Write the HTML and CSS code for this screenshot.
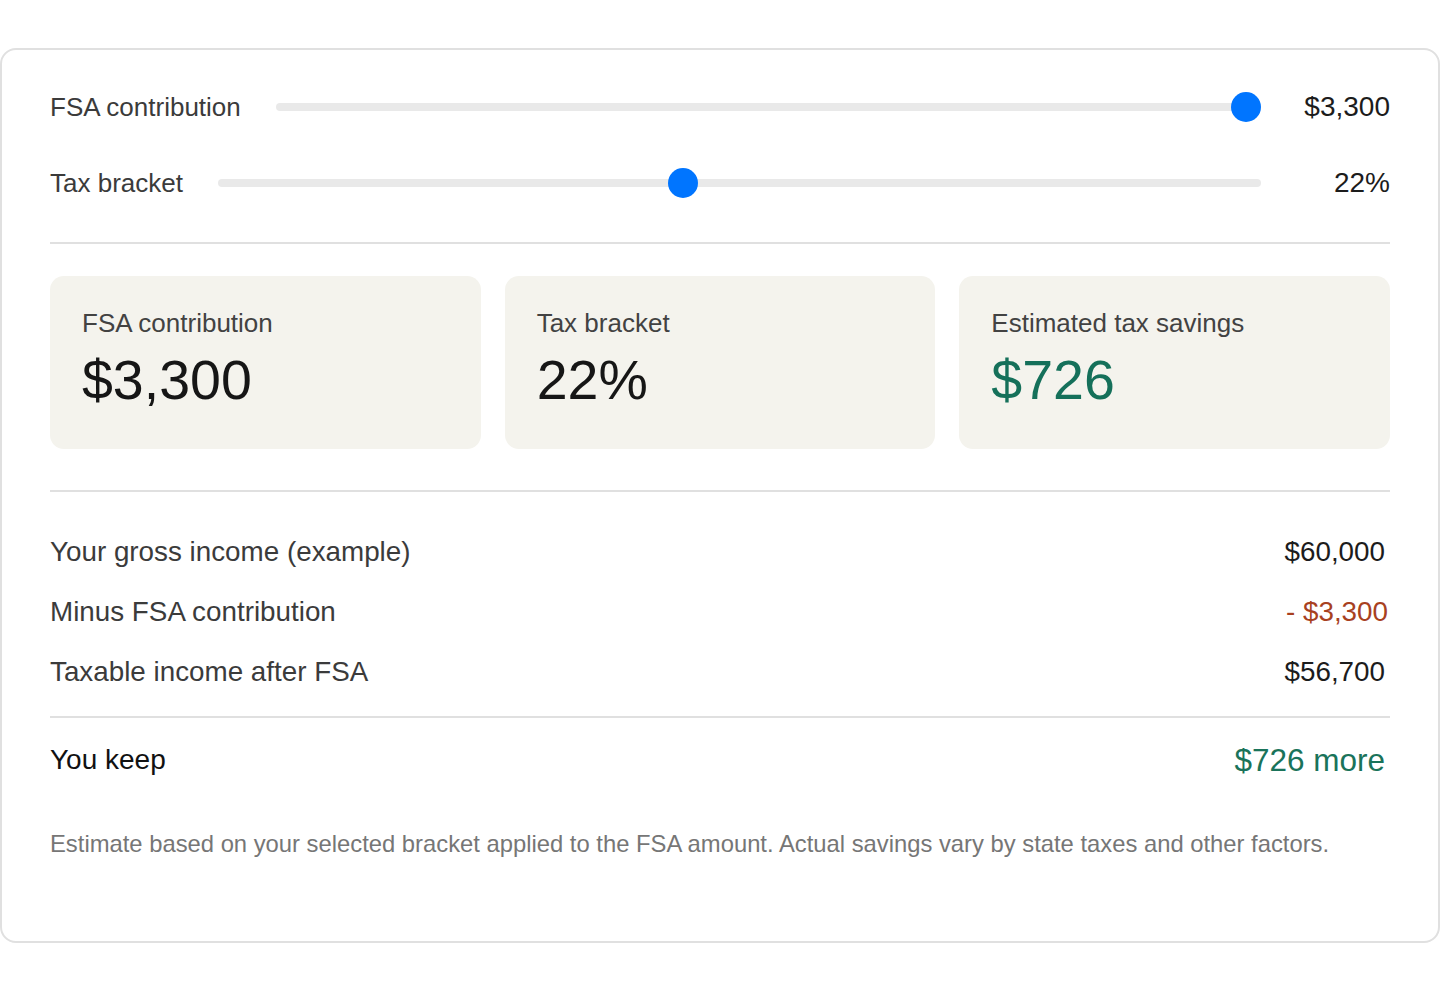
FILE: index.html
```html
<!DOCTYPE html>
<html lang="en">
<head>
  <meta charset="UTF-8">
  <title>FSA Tax Savings</title>
  <meta name="viewport" content="width=device-width, initial-scale=1.0">
  <link rel="stylesheet" href="styles.css">
</head>
<body>
  <div class="calc">
    <div class="slider-row">
      <label for="fsa">FSA contribution</label>
      <input type="range" id="fsa" min="0" max="3300" step="50" value="3300">
      <span class="slider-value" id="fsa-out">$3,300</span>
    </div>
    <div class="slider-row">
      <label for="bracket">Tax bracket</label>
      <input type="range" id="bracket" min="10" max="37" step="1" value="22">
      <span class="slider-value" id="bracket-out">22%</span>
    </div>

    <hr class="divider divider-top">

    <div class="stats">
      <div class="stat">
        <div class="stat-label">FSA contribution</div>
        <div class="stat-value" id="stat-fsa">$3,300</div>
      </div>
      <div class="stat">
        <div class="stat-label">Tax bracket</div>
        <div class="stat-value" id="stat-bracket">22%</div>
      </div>
      <div class="stat">
        <div class="stat-label">Estimated tax savings</div>
        <div class="stat-value green" id="stat-savings">$726</div>
      </div>
    </div>

    <hr class="divider divider-mid">

    <div class="breakdown">
      <div class="line">
        <span>Your gross income (example)</span>
        <span class="amount">$60,000</span>
      </div>
      <div class="line">
        <span>Minus FSA contribution</span>
        <span class="amount minus" id="minus">- $3,300</span>
      </div>
      <div class="line">
        <span>Taxable income after FSA</span>
        <span class="amount" id="taxable">$56,700</span>
      </div>
    </div>

    <hr class="divider divider-low">

    <div class="keep">
      <span>You keep</span>
      <span class="keep-amount" id="keep">$726 more</span>
    </div>

    <p class="note">Estimate based on your selected bracket applied to the FSA amount. Actual savings vary by state taxes and other factors.</p>
  </div>

  <script>
  const GROSS = 60000;
  const fsaInput = document.getElementById('fsa');
  const bracketInput = document.getElementById('bracket');

  function money(n) {
    return '$' + Math.round(n).toLocaleString('en-US');
  }

  function update() {
    const fsa = Number(fsaInput.value);
    const rate = Number(bracketInput.value);
    const savings = fsa * rate / 100;
    document.getElementById('fsa-out').textContent = money(fsa);
    document.getElementById('bracket-out').textContent = rate + '%';
    document.getElementById('stat-fsa').textContent = money(fsa);
    document.getElementById('stat-bracket').textContent = rate + '%';
    document.getElementById('stat-savings').textContent = money(savings);
    document.getElementById('minus').textContent = '- ' + money(fsa);
    document.getElementById('taxable').textContent = money(GROSS - fsa);
    document.getElementById('keep').textContent = money(savings) + ' more';
  }

  fsaInput.addEventListener('input', update);
  bracketInput.addEventListener('input', update);
  update();
  </script>
</body>
</html>
```

FILE: styles.css
```css
body {
  margin: 0;
  padding-top: 48px;
  background: #fff;
  font-family: "Liberation Sans", Arial, sans-serif;
  color: #222;
}
.calc {
  border: 2px solid #e0e0e0;
  border-radius: 16px;
  padding: 40px 48px 82px;
}
.slider-row {
  display: flex;
  align-items: center;
  gap: 35px;
  height: 34px;
}
.slider-row + .slider-row {
  margin-top: 42px;
}
.slider-row label {
  font-size: 26px;
  color: #3b3b3b;
  white-space: nowrap;
}
.slider-value {
  width: 94px;
  text-align: right;
  font-size: 28px;
  color: #1c1c1c;
}
input[type=range] {
  -webkit-appearance: none;
  appearance: none;
  flex: 1;
  margin: 0;
  height: 30px;
  background: transparent;
}
input[type=range]::-webkit-slider-runnable-track {
  height: 8px;
  border-radius: 4px;
  background: #e9e9e9;
}
input[type=range]::-webkit-slider-thumb {
  -webkit-appearance: none;
  width: 30px;
  height: 30px;
  margin-top: -11px;
  border-radius: 50%;
  background: #0075ff;
  border: none;
}
.divider {
  border: none;
  height: 2px;
  background: #e0e0e0;
  margin: 0;
}
.divider-top {
  margin-top: 42px;
}
.stats {
  display: grid;
  grid-template-columns: repeat(3, 1fr);
  gap: 24px;
  margin-top: 32px;
}
.stat {
  background: #f4f3ed;
  border-radius: 14px;
  padding: 32px 32px 38px;
}
.stat-label {
  font-size: 26px;
  line-height: 30px;
  color: #424242;
}
.stat-value {
  margin-top: 11px;
  font-size: 55.5px;
  line-height: 62px;
  color: #161616;
}
.green {
  color: #15705a;
}
.divider-mid {
  margin-top: 41px;
}
.breakdown {
  margin-top: 40px;
}
.line {
  display: flex;
  justify-content: space-between;
  align-items: center;
  height: 40px;
  font-size: 27.8px;
  color: #3b3b3b;
}
.line + .line {
  margin-top: 20px;
}
.amount {
  color: #1c1c1c;
  padding-right: 5px;
}
.amount.minus {
  color: #a8411f;
  padding-right: 2px;
}
.divider-low {
  margin-top: 24px;
}
.keep {
  display: flex;
  justify-content: space-between;
  align-items: center;
  height: 40px;
  margin-top: 22px;
  font-size: 28px;
  color: #111;
}
.keep-amount {
  font-size: 31.5px;
  color: #1a735a;
  padding-right: 5px;
}
.note {
  margin: 49px 0 0;
  font-size: 23.8px;
  line-height: 30px;
  color: #767676;
}
```
